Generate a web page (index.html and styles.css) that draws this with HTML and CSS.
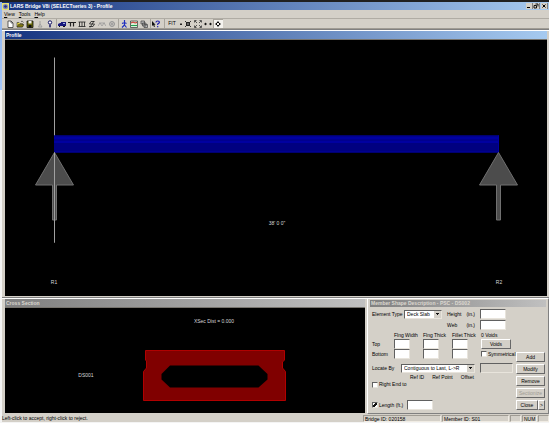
FILE: index.html
```html
<!DOCTYPE html>
<html lang="en">
<head>
    <meta charset="UTF-8">
    <meta name="viewport" content="width=device-width, initial-scale=1.0">
    <title>LARS Bridge V8i (SELECTseries 3) - Profile</title>
    <link rel="stylesheet" href="styles.css">
</head>
<body>
    <div class="app">
        <header class="titlebar">
            <svg class="app-icon" viewBox="0 0 8 8"><rect width="8" height="8" fill="#e8e070"/><circle cx="4" cy="4" r="3" fill="#8088b8"/><path d="M2.500 4h3M4 2.500v3" stroke="#203080" stroke-width="1.500"/></svg>
            <h1>LARS Bridge V8i (SELECTseries 3) - Profile</h1>
            <div class="window-buttons">
                <button type="button" aria-label="Minimize"><svg viewBox="0 0 6 6"><path d="M1 4.500h3" stroke="#000"/></svg></button>
                <button type="button" aria-label="Restore"><svg viewBox="0 0 6 6"><path d="M2.500 1h2.500v2.500M1 2.500h2.500v2.500h-2.500z" stroke="#000" fill="none" stroke-width=".9"/></svg></button>
                <button type="button" class="close" aria-label="Close"><svg viewBox="0 0 6 6"><path d="M1.500 1.500l3 3M4.500 1.500l-3 3" stroke="#000"/></svg></button>
            </div>
        </header>
        <nav class="menubar">
            <a href="#"><u>V</u>iew</a>
            <a href="#"><u>T</u>ools</a>
            <a href="#"><u>H</u>elp</a>
        </nav>
        <div class="toolbar">
            <div class="group">
                <button type="button" aria-label="New"><svg viewBox="0 0 8 8"><path d="M2 1h3l2 2v4.500H2z" fill="#fff" stroke="#222" stroke-width=".7"/><path d="M5 1v2h2" fill="none" stroke="#222" stroke-width=".6"/></svg></button>
                <button type="button" aria-label="Open"><svg viewBox="0 0 8 8"><path d="M1 7V2.500h2l1 1h2.500V7z" fill="#e8d840" stroke="#333" stroke-width=".6"/><path d="M1 7l1.500-2.500H8L6.500 7z" fill="#807810" stroke="#222" stroke-width=".5"/><path d="M5 1.500q1.500-1 2.500 1" fill="none" stroke="#222" stroke-width=".6"/></svg></button>
                <button type="button" aria-label="Save"><svg viewBox="0 0 8 8"><path d="M1 1h6v6.500H1z" fill="#686808" stroke="#111" stroke-width=".8"/><path d="M2.500 1h3v2.500h-3z" fill="#eee"/><path d="M2.500 5h3v2.500h-3z" fill="#111"/></svg></button>
                <button type="button" aria-label="Load"><svg viewBox="0 0 8 8"><path d="M4 1v3M4 4L2.500 7h3.500z" fill="none" stroke="#999" stroke-width=".9"/></svg></button>
                <button type="button" aria-label="Hint"><svg viewBox="0 0 8 8"><circle cx="4" cy="2.500" r="1.700" fill="#fff" stroke="#101060"/><path d="M4 4.500v3M3 6h2" stroke="#101060"/></svg></button>
            </div>
            <div class="group">
                <button type="button" aria-label="Vehicle"><svg viewBox="0 0 8 8"><path d="M0 4l2-1h1v3H0zM3 2h5v4H3z" fill="#18187c"/><path d="M5 3h2v1H5z" fill="#9ab0e0"/><path d="M1 6.500h1M5 6.500h2" stroke="#111"/></svg></button>
                <button type="button" aria-label="Supports"><svg viewBox="0 0 8 8"><path d="M0 2.500h8M2.500 3v3.500M5.500 3v3.500" stroke="#222" stroke-width="1.200"/></svg></button>
                <button type="button" aria-label="Members"><svg viewBox="0 0 8 8"><path d="M.5 2h7M.5 6.500h7M1.500 2v4.500M4 2v4.500M6.500 2v4.500" stroke="#222" stroke-width=".8"/></svg></button>
                <button type="button" aria-label="Rebar"><svg viewBox="0 0 8 8"><path d="M6.500 1.500H3L1.500 4h5L5 6.500H1M6 1L2 7.500" fill="none" stroke="#222" stroke-width=".8"/></svg></button>
                <button type="button" aria-label="Tendon"><svg viewBox="0 0 8 8"><path d="M0 6l2-3 2 3 2-3 2 3M1 3h6" fill="none" stroke="#999" stroke-width=".8"/></svg></button>
                <button type="button" aria-label="Settings"><svg viewBox="0 0 8 8"><circle cx="4" cy="4" r="2.500" fill="none" stroke="#999"/><path d="M1 4h6M4 1v6M2 2l4 4M6 2L2 6" stroke="#999" stroke-width=".6"/></svg></button>
            </div>
            <div class="group">
                <button type="button" aria-label="Run"><svg viewBox="0 0 8 8"><path d="M4.500 0v3M2 3.500l2.500-1 2 1M4.500 3v2L2 7.500M4.500 5l2 2.500" fill="none" stroke="#2030c0" stroke-width="1.200"/></svg></button>
                <button type="button" aria-label="Results"><svg viewBox="0 0 8 8"><path d="M.5 1h7v6.500h-7z" fill="#d8f0d8" stroke="#333" stroke-width=".7"/><path d="M1 3l2-1 2 1 2-.5" fill="none" stroke="#d02020"/><path d="M1 5.500h6" stroke="#20a050"/></svg></button>
                <button type="button" aria-label="Reports"><svg viewBox="0 0 8 8"><path d="M1 1h3.500v3H1zM2.500 3h3.500v3H2.500zM4 4.500h3.500V7.500H4z" fill="#bbb" stroke="#444" stroke-width=".7"/></svg></button>
            </div>
            <div class="group">
                <button type="button" aria-label="Context help"><svg viewBox="0 0 8 8"><path d="M0 1v5l1.200-1L2 7l1-.5-.8-1.700h1.400z" fill="#111"/><path d="M4 2.500q0-1.500 1.700-1.500t1.700 1.300q0 .8-1.700 1.700v1M5.700 6v1.200" fill="none" stroke="#2020b0" stroke-width="1.200"/></svg></button>
            </div>
            <div class="group zoom">
                <button type="button" class="fit">FIT</button>
                <button type="button" class="dot" aria-label="Center"><svg viewBox="0 0 8 8"><path d="M2 4.500h4" stroke="#222" stroke-width="3"/></svg></button>
                <button type="button" aria-label="Zoom in"><svg viewBox="0 0 8 8"><path d="M1 1l6 6M7 1L1 7" stroke="#222" stroke-width=".9"/><path d="M2.500 2.500h3v3h-3z" fill="#666" stroke="#222"/></svg></button>
                <button type="button" aria-label="Zoom out"><svg viewBox="0 0 8 8"><path d="M.5 2.500v-2h2M5.500.5h2v2M7.500 5.500v2h-2M2.500 7.500h-2v-2M1 1l2 2M7 1L5 3M1 7l2-2M7 7L5 5" fill="none" stroke="#333" stroke-width=".8"/></svg></button>
                <button type="button" aria-label="Stretch"><svg viewBox="0 0 8 8"><path d="M0 4l2-1.500v3zM8 4L6 2.500v3z"/><path d="M1 4h2M5 4h2" stroke="#222" stroke-width=".9"/></svg></button>
                <button type="button" class="pressed" aria-label="Pan"><svg viewBox="0 0 8 8"><path d="M4 1l1.500 2h-3zM4 7l1.500-2h-3zM1 4l2-1.500v3zM7 4L5 2.500v3z"/></svg></button>
            </div>
        </div>
        <main class="workspace">
            <section class="pane profile">
                <h2>Profile</h2>
                <svg class="canvas" viewBox="0 0 542 255">
                    <path d="M49.500 17v185" stroke="#a0a0a0"/>
                    <rect x="49" y="95" width="445" height="17" fill="#000080"/>
                    <path d="M49 95.500h445M49 99.500h445" stroke="#00009c"/>
                    <path d="M49 97.500h445M49 101.500h445" stroke="#0000c0"/>
                    <path d="M49 111.500h445M493.500 95v17" stroke="#0000a0"/>
                    <g class="support">
                        <path d="M49.500 112L68.500 144.500H51.500V179.500H47.500V144.500H30.500z"/>
                        <path d="M493.500 112L512.500 144.500H495.500V179.500H491.500V144.500H474.500z"/>
                    </g>
                    <path d="M49.500 112v90" stroke="#a0a0a0"/>
                    <text x="272" y="184">38' 0 0"</text>
                    <text x="49" y="243">R1</text>
                    <text x="494" y="243">R2</text>
                </svg>
            </section>
            <div class="lower">
                <section class="pane cross">
                    <h2>Cross Section</h2>
                    <svg class="canvas" viewBox="0 0 360 105">
                        <path class="section" d="M140.500 42.500H279.500V52L277.500 54V60L280.500 63.500V92.500H138.500V63.500L141.500 60V53L140.500 52z"/>
                        <path d="M165 57.500H253.500L262.500 66V71.500L253.500 79.500H165L156.500 71.500V66z"/>
                        <text x="209" y="15">XSec Dist = 0.000</text>
                        <text x="81" y="69">DS001</text>
                    </svg>
                </section>
                <form class="dialog">
                    <h2>Member Shape Description - PSC - DS002</h2>
                    <div class="dialog-body">
                        <div class="fields">
                            <div class="size">
                                <label for="type">Element Type</label>
                                <select id="type"><option>Deck Slab</option></select>
                                <label class="dim" for="height"><span>Height</span><span>(in.)</span></label>
                                <input type="text" id="height">
                                <label class="dim web" for="web"><span>Web</span><span>(in.)</span></label>
                                <input type="text" id="web">
                            </div>
                            <div class="flanges">
                                <span class="head first">Flng Width</span>
                                <span class="head">Flng Thick</span>
                                <span class="head">Fillet Thick</span>
                                <span class="head">0 Voids</span>
                                <span>Top</span>
                                <input type="text" aria-label="Top flange width">
                                <input type="text" aria-label="Top flange thickness">
                                <input type="text" aria-label="Top fillet thickness">
                                <button type="button">Voids</button>
                                <span>Bottom</span>
                                <input type="text" aria-label="Bottom flange width">
                                <input type="text" aria-label="Bottom flange thickness">
                                <input type="text" aria-label="Bottom fillet thickness">
                                <label class="check"><input type="checkbox">Symmetrical</label>
                            </div>
                            <div class="locate">
                                <label for="locate">Locate By</label>
                                <select id="locate"><option>Contiguous to Last, L-&gt;R</option></select>
                                <input type="text" aria-label="Location" disabled>
                            </div>
                            <div class="refs">
                                <span>Ref ID</span>
                                <span>Ref Point</span>
                                <span>Offset</span>
                            </div>
                            <label class="check"><input type="checkbox">Right End to</label>
                            <div class="length">
                                <label class="check"><input type="checkbox" checked>Length (ft.)</label>
                                <input type="text" aria-label="Length in feet">
                            </div>
                        </div>
                        <div class="actions">
                            <button type="button">Add</button>
                            <button type="button">Modify</button>
                            <button type="button">Remove</button>
                            <button type="button" disabled>Sectionize</button>
                            <div class="split">
                                <button type="button">Close</button>
                                <button type="button" class="more">&gt;</button>
                            </div>
                        </div>
                    </div>
                </form>
            </div>
        </main>
        <footer class="statusbar">
            <span class="message">Left-click to accept, right-click to reject.</span>
            <span class="cell bridge">Bridge ID: 020158</span>
            <span class="cell member">Member ID: S01</span>
            <span class="cell"></span>
            <span class="cell num">NUM</span>
            <span class="cell"></span>
        </footer>
    </div>
</body>
</html>
```
FILE: styles.css
```css
:root {
    --face: #d4d0c8;
    --light: #ffffff;
    --shadow: #808080;
    --ink: #000000;
}
* {
    box-sizing: border-box;
}
body {
    margin: 0;
    height: 100vh;
    padding: 2px 0 1px 2px;
    background: linear-gradient(#202020 2px, #8db4f0 2px, #a8c8f8 90px, #f4f4f4 90px);
    font-family: "Liberation Sans", Arial, sans-serif;
    font-size: 5px;
    line-height: 7px;
    color: var(--ink);
}
h1, h2 {
    margin: 0;
    font-size: 5px;
    line-height: 8px;
    font-weight: bold;
    color: #fff;
    white-space: nowrap;
}
button, input, select {
    font: inherit;
    color: inherit;
    margin: 0;
    padding: 0;
    border-radius: 0;
}
.app {
    height: 100%;
    display: flex;
    flex-direction: column;
    background: var(--face);
}
.titlebar {
    display: flex;
    align-items: center;
    gap: 1px;
    height: 8px;
    padding-right: 1px;
    background: linear-gradient(90deg, #163480, #a6caf0);
}
.app-icon {
    width: 7px;
    height: 7px;
}
.titlebar h1 {
    flex: 1;
}
.window-buttons {
    display: flex;
}
.window-buttons button {
    width: 7px;
    height: 6px;
    display: flex;
    align-items: center;
    justify-content: center;
    background: var(--face);
    border: 0;
    border-right: 1px solid var(--shadow);
}
.window-buttons .close {
    margin-left: 1px;
}
.window-buttons svg {
    width: 6px;
    height: 6px;
}
.menubar {
    display: flex;
    gap: 4px;
    height: 9px;
    padding: 1px 2px;
    border-bottom: 1px solid #b0aca4;
}
.menubar a {
    color: inherit;
    text-decoration: none;
}
.toolbar {
    display: flex;
    align-items: center;
    height: 10px;
    padding-left: 3px;
    border-bottom: 1px solid #a09c94;
}
.group {
    display: flex;
}
.group + .group {
    margin-left: 1px;
    border-left: 1px solid #a8a49c;
}
.group + .zoom {
    margin-left: 3px;
}
.toolbar button {
    width: 10px;
    height: 9px;
    display: flex;
    align-items: center;
    justify-content: center;
    border: 0;
    background: none;
}
.toolbar svg {
    width: 8px;
    height: 8px;
}
.toolbar .fit {
    width: 14px;
}
.toolbar .dot {
    width: 4px;
}
.toolbar .pressed {
    background: #f4f2ee;
    box-shadow: inset 1px 1px #a8a49c;
}
.workspace {
    flex: 1;
    min-height: 0;
    display: flex;
    flex-direction: column;
    gap: 1px;
    padding-top: 1px;
    background: var(--shadow);
}
.pane {
    display: flex;
    flex-direction: column;
    min-width: 0;
    min-height: 0;
    padding: 0 2px 1px 3px;
    background: var(--face);
    border-top: 1px solid var(--light);
}
.pane h2 {
    padding-left: 1px;
    border-bottom: 1px solid #77746e;
}
.profile {
    flex: 1;
}
.profile h2 {
    background: linear-gradient(90deg, #163480, #a6caf0);
}
.cross h2, .dialog h2 {
    background: linear-gradient(90deg, #808080, #c0c0c0);
    color: #dcd8d0;
}
.canvas {
    flex: 1;
    min-height: 0;
    width: 100%;
    background: #000;
}
.canvas text {
    fill: #d8d8d8;
    font-size: 5px;
    text-anchor: middle;
}
.support path {
    fill: #4c4c4c;
    stroke: #707070;
}
.section {
    fill: #800000;
    stroke: #b00000;
}
.lower {
    display: flex;
}
.cross {
    flex: 1;
}

/* member shape dialog */
.dialog {
    width: 182px;
    padding: 1px 2px 0;
    background: var(--face);
    border: 1px solid;
    border-color: var(--light) var(--shadow) var(--shadow) var(--light);
}
.dialog h2 {
    padding-left: 1px;
    line-height: 7px;
}
.dialog-body {
    display: flex;
    justify-content: space-between;
    padding: 2px 1px 1px 2px;
}
.dialog input[type="text"] {
    width: 100%;
    height: 10px;
    min-width: 0;
    background: #fff;
    border: 1px solid;
    border-color: #606060 #e8e4dc #e8e4dc #606060;
}
.dialog input[type="text"]:disabled {
    background: var(--face);
}
.dialog select {
    height: 9px;
    width: 100%;
    padding-left: 2px;
    appearance: none;
    border: 1px solid;
    border-color: #606060 #e8e4dc #e8e4dc #606060;
    background:
        linear-gradient(#111, #111) right 2px top 2px / 3px 1px no-repeat,
        linear-gradient(#111, #111) right 3px top 3px / 1px 1px no-repeat,
        linear-gradient(var(--face), var(--face)) right / 7px 100% no-repeat,
        #fff;
}
.dialog button {
    height: 10px;
    background: var(--face);
    border: 1px solid;
    border-color: var(--light) #686868 #686868 var(--light);
    line-height: 7px;
    text-align: center;
}
.dialog button:disabled {
    color: #a09c94;
}
.fields {
    width: 141px;
}
.size {
    display: grid;
    grid-template-columns: 32px 38px 38px 26px;
    row-gap: 1px;
    align-items: center;
    white-space: nowrap;
}
.dim {
    display: flex;
    justify-content: space-between;
    padding: 0 5px;
}
.web {
    grid-column: 3;
}
.flanges {
    display: grid;
    grid-template-columns: 9px 16px 16px 16px 33px;
    column-gap: 13px;
    align-items: center;
    padding-top: 2px;
}
.head {
    white-space: nowrap;
}
.first {
    grid-column: 2;
}
.flanges button {
    width: 30px;
}
.check {
    display: flex;
    align-items: center;
    gap: 1px;
    white-space: nowrap;
}
.check input {
    flex: none;
    appearance: none;
    width: 6px;
    height: 6px;
    background: #fff;
    border: 1px solid;
    border-color: #606060 #e8e4dc #e8e4dc #606060;
}
.check input:checked {
    background: linear-gradient(135deg, #fff 35%, #111 35%, #111 65%, #fff 65%);
}
.locate {
    display: grid;
    grid-template-columns: 29px 74px 38px;
    align-items: center;
    padding-top: 4px;
}
.dialog .locate input {
    width: 33px;
    margin-left: 5px;
}
.refs {
    display: flex;
    gap: 8px;
    padding: 1px 0 0 38px;
}
.length {
    display: flex;
    align-items: center;
    gap: 4px;
    padding-top: 12px;
}
.dialog .length input[type="text"] {
    width: 26px;
}
.actions {
    width: 29px;
    display: flex;
    flex-direction: column;
    justify-content: flex-end;
    gap: 2px;
}
.split {
    display: flex;
}
.split button {
    flex: 1;
}
.split .more {
    flex: 0 0 7px;
}

.statusbar {
    display: flex;
    gap: 1px;
    height: 8px;
    padding-top: 1px;
    white-space: nowrap;
}
.message {
    flex: 1;
}
.cell {
    width: 11px;
    height: 7px;
    padding-left: 1px;
    border: 1px solid;
    border-color: #a09c94 #f0ece4 #f0ece4 #a09c94;
    line-height: 6px;
}
.bridge {
    width: 78px;
}
.member {
    width: 67px;
}
.num {
    width: 15px;
}
```
